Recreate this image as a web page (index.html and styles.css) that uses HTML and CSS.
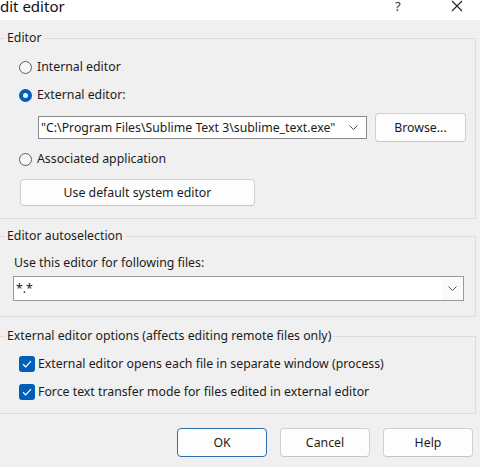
FILE: index.html
```html
<!DOCTYPE html>
<html lang="en">
<head>
    <meta charset="UTF-8">
    <meta name="viewport" content="width=device-width, initial-scale=1.0">
    <title>Edit editor</title>
    <link rel="stylesheet" href="styles.css">
</head>
<body>
    <div class="titlebar">
        <span class="caption">dit editor</span>
        <span class="help-btn">?</span>
        <span class="close-btn">
            <svg width="12" height="12" viewBox="0 0 12 12"><path d="M1 1L11 11M11 1L1 11" stroke="#222" stroke-width="1.1" fill="none"/></svg>
        </span>
    </div>

    <div class="group group-editor">
        <div class="group-title">Editor</div>
        <div class="group-body">
            <label class="opt opt-first">
                <span class="radio"></span>
                Internal editor
            </label>
            <label class="opt opt-second">
                <span class="radio checked"></span>
                External editor:
            </label>

            <div class="path-row">
                <div class="combo path-combo">
                    <span class="combo-text">"C:\Program Files\Sublime Text 3\sublime_text.exe"</span>
                    <svg class="chevron" width="9" height="5" viewBox="0 0 9 5"><path d="M0.5 0.5L4.5 4.5L8.5 0.5" stroke="#555" fill="none"/></svg>
                </div>
                <button class="btn browse">Browse...</button>
            </div>

            <label class="opt opt-assoc">
                <span class="radio"></span>
                Associated application
            </label>

            <button class="btn default-btn">Use default system editor</button>
        </div>
    </div>

    <div class="group group-auto">
        <div class="group-title">Editor autoselection</div>
        <div class="group-body">
            <div class="field-label">Use this editor for following files:</div>
            <div class="combo mask-combo">
                <span class="combo-text">*.*</span>
                <span class="arrow-cell">
                    <svg class="chevron" width="9" height="5" viewBox="0 0 9 5"><path d="M0.5 0.5L4.5 4.5L8.5 0.5" stroke="#555" fill="none"/></svg>
                </span>
            </div>
        </div>
    </div>

    <div class="group group-options">
        <div class="group-title">External editor options (affects editing remote files only)</div>
        <div class="group-body">
            <label class="opt check-row">
                <span class="check"><svg width="10" height="8" viewBox="0 0 10 8"><path d="M1 4.2L3.7 6.8L9 1.2" stroke="#fff" stroke-width="1.2" fill="none"/></svg></span>
                External editor opens each file in separate window (process)
            </label>
            <label class="opt check-row check-second">
                <span class="check"><svg width="10" height="8" viewBox="0 0 10 8"><path d="M1 4.2L3.7 6.8L9 1.2" stroke="#fff" stroke-width="1.2" fill="none"/></svg></span>
                Force text transfer mode for files edited in external editor
            </label>
        </div>
    </div>

    <div class="footer">
        <button class="btn dlg-btn primary">OK</button>
        <button class="btn dlg-btn">Cancel</button>
        <button class="btn dlg-btn">Help</button>
    </div>
</body>
</html>
```

FILE: styles.css
```css
body {
    margin: 0;
    background: #f0f0f0;
    font-family: "Noto Sans", "Open Sans", sans-serif;
    font-size: 12.3px;
    color: #1b1b1b;
    overflow: hidden;
}

/* window caption */
.titlebar {
    height: 20px;
    background: #fff;
    display: flex;
    align-items: flex-start;
    overflow: hidden;
}

.titlebar .caption {
    font-size: 15px;
    line-height: 15px;
    margin-top: -1px;
    color: #111;
    flex: 1;
}

.titlebar .help-btn {
    font-size: 13px;
    line-height: 13px;
    color: #333;
    width: 56px;
}

.titlebar .close-btn {
    width: 29px;
    line-height: 0;
}

/* group boxes */
.group {
    border: 1px solid #dcdcdc;
    border-left: none;
    margin-right: 4px;
}

.group-title {
    width: fit-content;
    margin: -8px 0 0 5px;
    padding: 0 2px;
    line-height: 14px;
    background: #f0f0f0;
}

.group-editor {
    margin-top: 18px;
    padding-bottom: 12px;
}

.group-editor .group-body {
    padding-left: 19px;
}

.group-auto {
    margin-top: 17px;
    padding-bottom: 15px;
}

.group-auto .group-body {
    padding-left: 13px;
}

.group-options {
    margin-top: 19px;
    padding-bottom: 11px;
}

.group-options .group-body {
    padding-left: 19px;
}

/* radio and check rows */
.opt {
    display: flex;
    align-items: center;
    height: 20px;
    line-height: 20px;
}

.opt-first {
    margin-top: 12px;
}

.opt-second {
    margin-top: 8px;
}

.opt-assoc {
    margin-top: 7px;
}

.radio {
    width: 11px;
    height: 11px;
    border: 1px solid #5d5d5d;
    border-radius: 50%;
    background: #f7f7f7;
    margin-right: 5px;
    flex-shrink: 0;
}

.radio.checked {
    width: 5px;
    height: 5px;
    border: 4px solid #005fb8;
    background: #fff;
}

.check-row {
    margin-top: 11px;
}

.check-row.check-second {
    margin-top: 8px;
}

.check {
    width: 16px;
    height: 16px;
    border-radius: 3px;
    background: #005fb8;
    margin-right: 3px;
    display: flex;
    align-items: center;
    justify-content: center;
    flex-shrink: 0;
}

/* combo boxes */
.path-row {
    display: flex;
    align-items: center;
    margin: 8px 0 0 19px;
}

.combo {
    display: flex;
    align-items: center;
    background: #fff;
    border: 1px solid #8a8a8a;
    box-sizing: border-box;
}

.combo-text {
    flex: 1;
    white-space: nowrap;
    overflow: hidden;
    padding-left: 2px;
}

.path-combo {
    width: 329px;
    height: 23px;
}

.path-combo .chevron {
    margin: 0 8px 0 6px;
}

.mask-combo {
    width: 451px;
    height: 25px;
    margin-top: 5px;
    border-color: #9a9a9a;
}

.arrow-cell {
    width: 21px;
    height: 100%;
    display: flex;
    align-items: center;
    justify-content: center;
    background: #fafafa;
}

.field-label {
    margin-top: 12px;
    line-height: 16px;
    padding-left: 1px;
}

/* push buttons */
.btn {
    font-family: inherit;
    font-size: 12.3px;
    color: #1b1b1b;
    background: #fdfdfd;
    border: 1px solid #d0d0d0;
    border-bottom-color: #c4c4c4;
    border-radius: 4px;
    padding: 0;
}

.browse {
    width: 91px;
    height: 29px;
    margin-left: 8px;
}

.default-btn {
    display: block;
    width: 235px;
    height: 27px;
    margin-top: 10px;
    margin-left: 1px;
}

.footer {
    display: flex;
    justify-content: flex-end;
    gap: 13px;
    padding: 14px 7px 0 0;
}

.dlg-btn {
    width: 90px;
    height: 29px;
}

.dlg-btn.primary {
    border: 1px solid #2d6fad;
}
```
